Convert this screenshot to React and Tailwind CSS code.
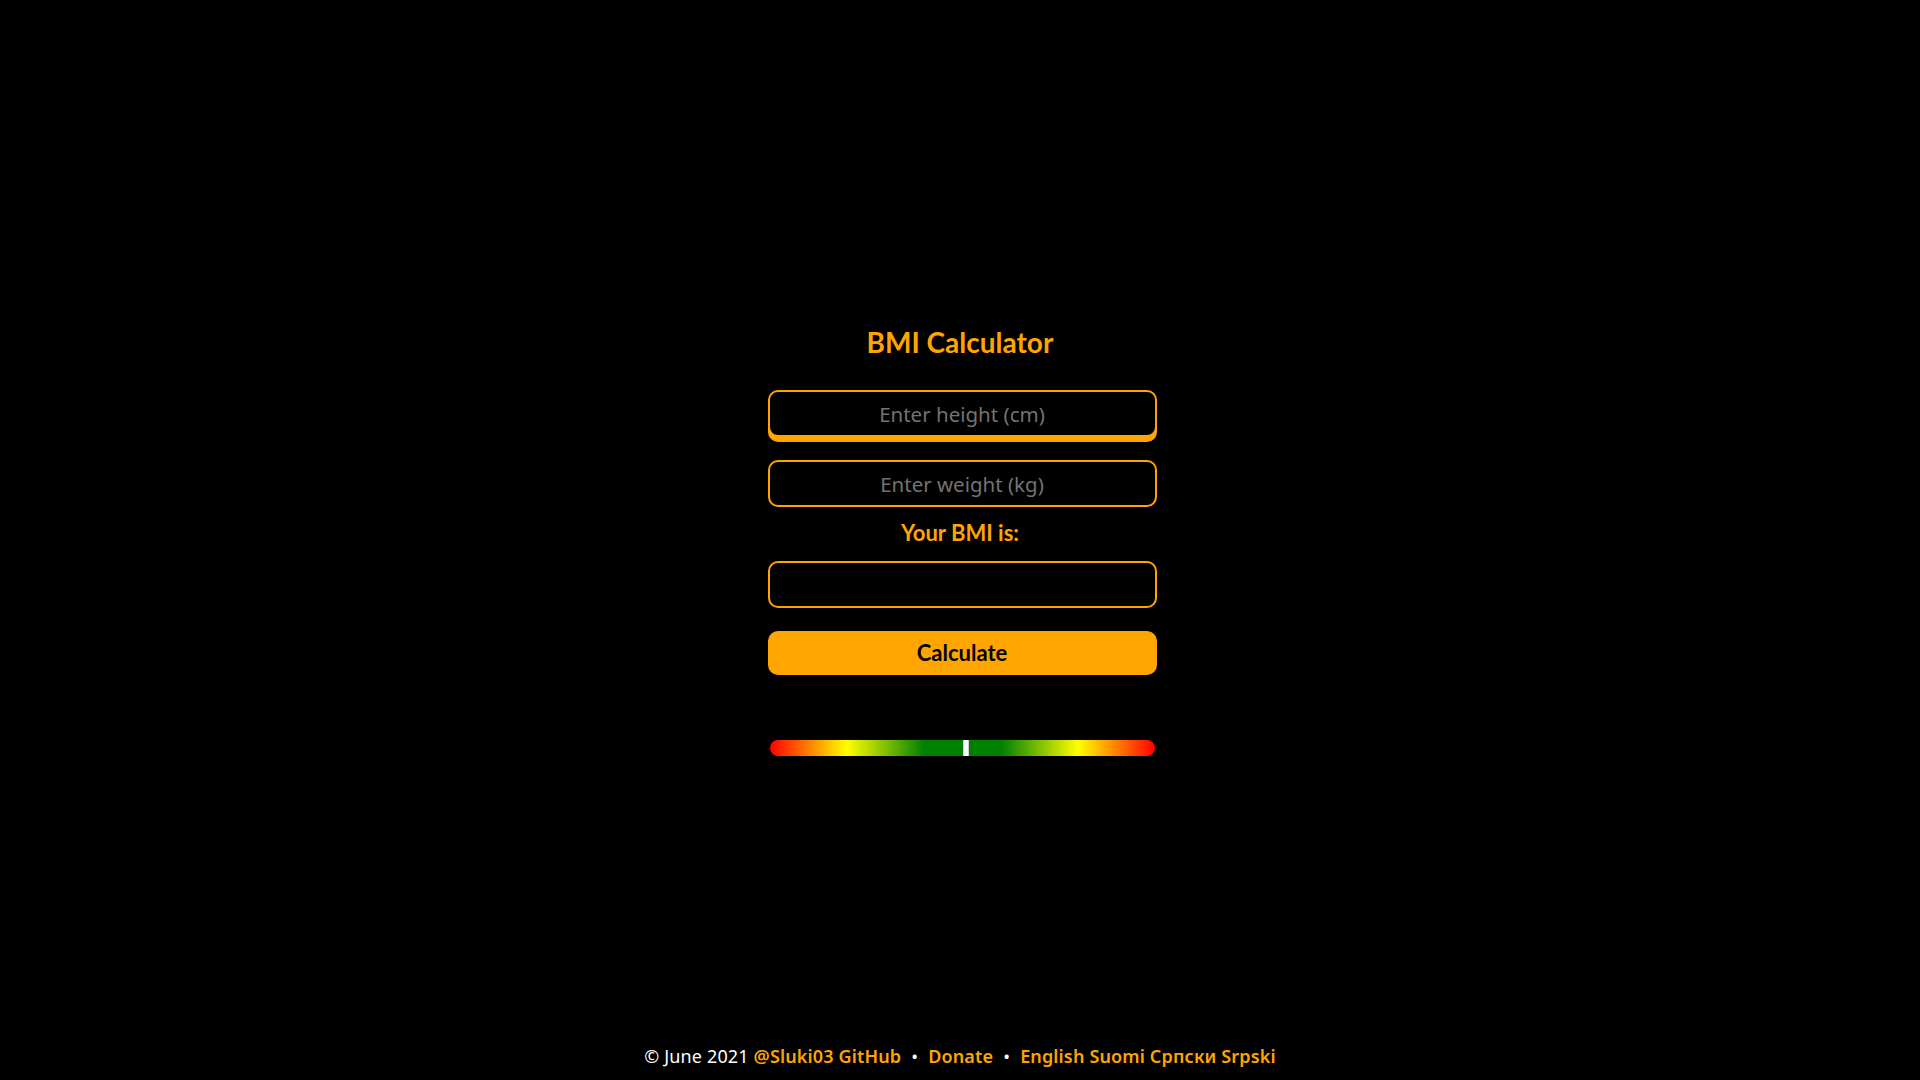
import React from "react";

export default function App() {
  return (
    <div className="min-h-screen bg-black flex flex-col font-['Lato','Noto_Sans',sans-serif]">
      <main className="flex flex-col items-center pt-[323px]">
        <h1 className="text-[28px] leading-[38px] font-bold text-[#ffa500]">BMI Calculator</h1>
        <input
          type="text"
          placeholder="Enter height (cm)"
          className="ml-[4px] mt-[29px] w-[389px] h-[47px] rounded-[10px] border-2 border-[#ffa500] bg-black text-center text-[20.5px] font-['Noto_Sans','Lato',sans-serif] text-white placeholder:text-[#737373] outline-none shadow-[0_5px_0_#ffa500]"
        />
        <input
          type="text"
          placeholder="Enter weight (kg)"
          className="ml-[4px] mt-[23px] w-[389px] h-[47px] rounded-[10px] border-2 border-[#ffa500] bg-black text-center text-[20.5px] font-['Noto_Sans','Lato',sans-serif] text-white placeholder:text-[#737373] outline-none"
        />
        <div className="mt-[11px] mb-[13px] text-[22px] leading-[30px] font-bold text-[#ffa500]">Your BMI is:</div>
        <div className="ml-[4px] w-[389px] h-[47px] rounded-[10px] border-2 border-[#ffa500] bg-black"></div>
        <button className="ml-[4px] mt-[23px] w-[389px] h-[44px] rounded-[10px] bg-[#ffa500] text-black text-[22px] leading-[30px] font-bold">
          Calculate
        </button>
        <div className="ml-[4px] mt-[65px] w-[385px] h-[16px] rounded-full relative bg-[linear-gradient(to_right,#ff0000_0%,#ffff00_20%,#008000_40%,#008000_60%,#ffff00_80%,#ff0000_100%)]">
          <div className="absolute top-0 left-[193px] w-[6px] h-[16px] bg-white border-x border-[#cfcfcf]"></div>
        </div>
      </main>
      <footer className="mt-auto pb-[12px] text-center text-[18px] leading-[24px] tracking-[0.15px] text-white font-['Noto_Sans','Lato',sans-serif]">
        © June 2021{" "}
        <a className="text-[#ffa500] font-semibold">@Sluki03 GitHub</a>
        <span className="mx-[10px]">•</span>
        <a className="text-[#ffa500] font-semibold">Donate</a>
        <span className="mx-[10px]">•</span>
        <a className="text-[#ffa500] font-semibold">English</a>{" "}
        <a className="text-[#ffa500] font-semibold">Suomi</a>{" "}
        <a className="text-[#ffa500] font-semibold">Српски</a>{" "}
        <a className="text-[#ffa500] font-semibold">Srpski</a>
      </footer>
    </div>
  );
}
